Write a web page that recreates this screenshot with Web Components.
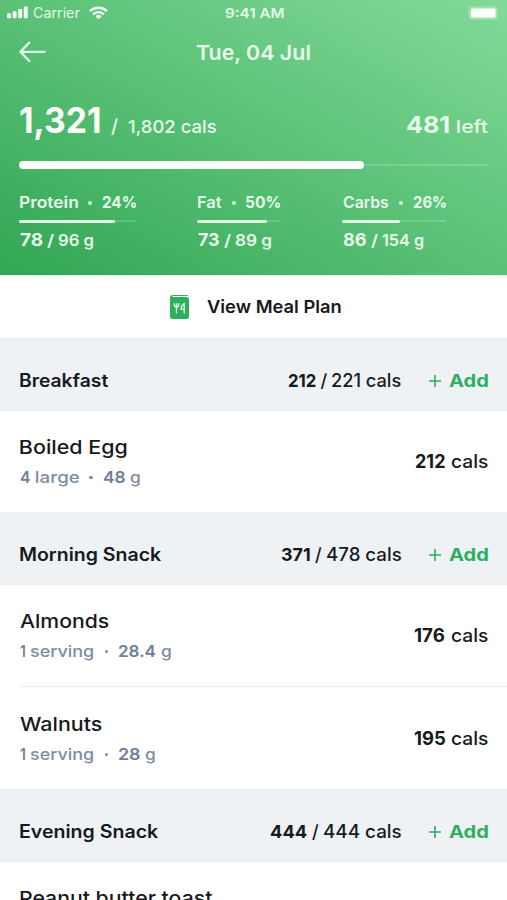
<!DOCTYPE html>
<html lang="en">
<head>
<meta charset="utf-8">
<title>Meal diary</title>
<style>
body{margin:0;background:#fff;width:507px;height:900px;overflow:hidden;font-family:Inter,"Open Sans",sans-serif;color:#17191d}
</style>
</head>
<body>
<diary-app></diary-app>
<script>
const ctx = document.createElement('canvas').getContext('2d');

// One run of text stretched to a given ink width: <fit-text w size weight gap>
class FitText extends HTMLElement {
  connectedCallback() {
    const a = n => this.getAttribute(n);
    const w = +a('w'), size = +a('size') || 18, weight = a('weight') || 500;
    const text = this.textContent;
    ctx.font = `${weight} ${size}px Inter`;
    const m = ctx.measureText(text);
    const k = w / (m.actualBoundingBoxLeft + m.actualBoundingBoxRight);
    const dx = m.actualBoundingBoxLeft * k;
    this.attachShadow({mode: 'open'}).innerHTML = `<style>
      :host{display:inline-block;flex:none;width:${w}px;margin-left:${a('gap') || 0}px;white-space:pre;font-size:${size}px;font-weight:${weight}}
      span{display:inline-block;transform-origin:0 50%;transform:translateX(${dx}px) scaleX(${k})}
    </style><span><slot></slot></span>`;
  }
}

class StatusBar extends HTMLElement {
  connectedCallback() {
    this.attachShadow({mode: 'open'}).innerHTML = `<style>
      :host{display:grid;grid-template-columns:225px 1fr auto;height:26px;line-height:25px;color:#e4f9e9}
      .l{display:flex;align-items:center;height:25px;padding-left:7px}
      .bars{margin-right:5px}.wifi{margin-left:9px}
      .bat{align-self:center;margin:-1px 6px 0 0}
      svg{display:block;flex:none}
    </style>
    <div class="l">
      <svg class="bars" width="21" height="13" viewBox="0 0 21 13" fill="#effcf2"><rect x="0" y="7.3" width="4" height="5" rx="1"/><rect x="5.6" y="5.3" width="4" height="7" rx="1"/><rect x="11.2" y="3" width="4" height="9.300" rx="1"/><rect x="16.8" y=".5" width="4" height="11.800" rx="1"/></svg>
      <fit-text w="46.5" size="14" weight="430">Carrier</fit-text>
      <svg class="wifi" width="19" height="14" viewBox="0 0 19 14" fill="none" stroke="#f3fdf5" stroke-width="2.400"><path d="M1 5.100a12.300 12.300 0 0 1 17 0"/><path d="M4 8.300a8 8 0 0 1 11 0"/><path d="M9.500 13.200 6.300 10.300a4.600 4.600 0 0 1 6.400 0z" fill="#f3fdf5" stroke="none"/></svg>
    </div>
    <div><fit-text w="59" size="13.5" weight="560">9:41 AM</fit-text></div>
    <svg class="bat" width="34" height="16" viewBox="0 0 34 16"><rect x="1.500" y="1.500" width="29" height="13" rx="3.500" fill="#fff" opacity=".28"/><rect x="4" y="3.500" width="24.500" height="9" rx="1.500" fill="#fff"/><path d="M31.500 6.200q1.600 1.600 0 3.600z" fill="#fff" opacity=".35"/></svg>`;
  }
}

class ProgressLine extends HTMLElement {
  connectedCallback() {
    const a = n => this.getAttribute(n);
    this.attachShadow({mode: 'open'}).innerHTML = `<style>
      :host{display:flex;align-items:center;width:${a('total')}px;height:${a('h')}px}
      .f{width:${a('fill')}px;height:100%;border-radius:9px;background:${a('color') || '#fff'}}
      .t{flex:1;height:2px;margin-left:-1px;background:rgba(255,255,255,.17)}
    </style><div class="f"></div><div class="t"></div>`;
  }
}

// Values are "text|width" pairs
const run = (v, size, weight, gap = 0) => {
  const [t, w] = v.split('|');
  return `<fit-text w="${w}" size="${size}" weight="${weight}" gap="${gap}">${t}</fit-text>`;
};

class MacroStat extends HTMLElement {
  connectedCallback() {
    const a = n => this.getAttribute(n);
    this.attachShadow({mode: 'open'}).innerHTML = `<style>
      :host{display:block;line-height:24px;width:${a('total')}px}
      .r{display:flex;align-items:baseline;height:24px;padding-left:.5px}
      .dot{align-self:center;width:4px;height:4px;border-radius:50%;background:#d5f5dc;margin:1px 0 0 10px}
      progress-line{margin:5.500px 0 5px}
    </style>
    <div class="r">${run(a('name'), 16, 560)}<i class="dot"></i>${run(a('pct'), 16, 680, 10.5)}</div>
    <progress-line total="${a('total')}" fill="${a('fill')}" h="3" color="#e0f8e5"></progress-line>
    <div class="r">${run(a('now'), 18, 700)}${run('/|7', 16, 560, 5)}${run(a('goal'), 16, 560, 4)}</div>`;
  }
}

class DayHeader extends HTMLElement {
  connectedCallback() {
    this.attachShadow({mode: 'open'}).innerHTML = `<style>
      :host{display:block;box-sizing:border-box;height:275px;color:#e6faeb;background:linear-gradient(to top right,#31a653 0%,#5cc278 52%,#82da98 100%)}
      .nav{display:grid;grid-template-columns:196px 1fr;height:52px;line-height:53px}
      .nav svg{display:block;margin:15px 0 0 18.500px}
      .sum{display:flex;align-items:baseline;height:50px;line-height:50px;padding:0 19px 0 20px;margin-top:17px}
      .sp{flex:1}
      .big{color:#fff}
      .main{margin:15.500px 0 0 19px}
      .macros{display:flex;margin:21.500px 0 0 19px}
      macro-stat+macro-stat{margin-left:61px}
    </style>
    <status-bar></status-bar>
    <div class="nav">
      <svg width="28" height="22" viewBox="0 0 28 22" fill="none" stroke="#e3f9e8" stroke-width="2.300" stroke-linecap="round" stroke-linejoin="round"><path d="M10.300 1.600 1.400 10.800l8.900 9.200M1.400 10.800h24.100"/></svg>
      <div>${run('Tue, 04 Jul|114', 20.5, 560)}</div>
    </div>
    <div class="sum">
      <span class="big">${run('1,321|80', 36, 750)}</span>${run('/|7', 19, 450, 11)}${run('1,802 cals|88', 17.8, 550, 9.5)}
      <span class="sp"></span>${run('481|42', 23.5, 720)}${run('left|31', 17.8, 550, 8.5)}
    </div>
    <progress-line class="main" total="469" fill="344.5" h="8"></progress-line>
    <div class="macros">
      <macro-stat name="Protein|58" pct="24%|34" total="117" fill="96" now="78|22.500" goal="96 g|35"></macro-stat>
      <macro-stat name="Fat|24" pct="50%|34" total="84" fill="70" now="73|21" goal="89 g|36"></macro-stat>
      <macro-stat name="Carbs|46" pct="26%|33" total="104" fill="58" now="86|23" goal="154 g|41"></macro-stat>
    </div>`;
  }
}

class PlanLink extends HTMLElement {
  connectedCallback() {
    this.attachShadow({mode: 'open'}).innerHTML = `<style>
      :host{display:flex;align-items:center;box-sizing:border-box;height:63px;line-height:24px;padding-left:170px;border-top:1px solid #e3f5e8}
      svg{flex:none;margin-right:18px}
    </style>
    <svg width="19" height="24" viewBox="0 0 19 24"><path d="M3 0h13.500q1.500 0 1.700 1.100H3.200q-.9.200-.9.900H16.500Q19 2.200 19 4.500V21.200Q19 24 16 24H3Q0 24 0 21.200V3Q0 0 3 0z" fill="#2fae5c"/><g fill="none" stroke="#d9f6e1" stroke-width="1.400" stroke-linecap="round" stroke-linejoin="round"><path d="M4.200 8.700q0 3.400 2.300 3.400T8.800 8.700M6.500 8.700v9"/><path d="M14.200 17.700V8.500q-3 1.800-3.200 5.900h3.200"/></g></svg>
    ${run('View Meal Plan|134', 17.6, 620)}`;
  }
}

class MealSection extends HTMLElement {
  connectedCallback() {
    const a = n => this.getAttribute(n);
    this.attachShadow({mode: 'open'}).innerHTML = `<style>
      :host{display:block}
      .h{display:flex;align-items:baseline;box-sizing:border-box;height:73px;line-height:24px;padding:29.500px 19px 0 20px;background:#eef2f5;border-top:1px solid #e9ecee;border-bottom:1px solid #e9ecee}
      .sp{flex:1}
      .add{display:flex;align-items:baseline;color:#2fae62;margin-left:28px}
      svg{align-self:center;flex:none}
    </style>
    <div class="h">${run(a('name'), 18, 630)}<span class="sp"></span>${run(a('now'), 18, 680)}${run('/|7', 18, 450, 5)}${run(a('goal'), 18, 490, 4.5)}
      <span class="add"><svg width="12" height="12" viewBox="0 0 12 12" stroke="#2fae62" stroke-width="1.600"><path d="M6 0v12M0 6h12"/></svg>${run('Add|39.5', 18, 700, 8)}</span></div>
    <slot></slot>`;
  }
}

class FoodRow extends HTMLElement {
  connectedCallback() {
    const a = n => this.getAttribute(n);
    const details = a('num') ? `<div class="d"><span class="q">${run(a('num'), 16.5, 580)}</span>${run(a('unit'), 16.5, 480, 5)}<i class="dot"></i><span class="q">${run(a('amt'), 16.5, 580, 10.5)}</span>${run('g|10.5', 16.5, 480, 5)}</div>` : '';
    const cals = a('cals') ? `<div class="c">${run(a('cals'), 18.3, 680)}${run('cals|37.5', 18.3, 490, 5.5)}</div>` : '';
    this.attachShadow({mode: 'open'}).innerHTML = `<style>
      :host{display:flex;align-items:flex-start;box-sizing:border-box;height:101px;padding:24px 19px 0 20px;background:#fff}
      :host([line]){height:102px;padding-left:0;margin-left:20px;border-bottom:1px solid #e9ecee}
      :host([tall]){height:102px;padding-top:25px}
      .t{flex:1}
      .n{height:26px;line-height:26px;margin-bottom:4px}
      .d,.c{display:flex;align-items:baseline;height:24px;line-height:24px}
      .c{margin-top:14px}
      .d{color:#808ca3}
      .dot{align-self:center;width:3.500px;height:3.500px;border-radius:50%;background:#808ca3;margin:1px 0 0 10.500px}
      .q{color:#717e98}
    </style>
    <div class="t"><div class="n">${run(a('name'), 19, 480)}</div>${details}</div>${cals}`;
  }
}

class DiaryApp extends HTMLElement {
  connectedCallback() {
    this.attachShadow({mode: 'open'}).innerHTML = `<style>:host{display:block;height:900px;overflow:hidden}</style>
    <day-header></day-header>
    <plan-link></plan-link>
    <meal-section name="Breakfast|89" now="212|28" goal="221 cals|68.5">
      <food-row name="Boiled Egg|107" num="4|10.5" unit="large|43" amt="48|22" cals="212|30"></food-row>
    </meal-section>
    <meal-section name="Morning Snack|142" now="371|29" goal="478 cals|74">
      <food-row line name="Almonds|89" num="1|5" unit="serving|64" amt="28.4|37" cals="176|31"></food-row>
      <food-row tall name="Walnuts|82" num="1|5" unit="serving|64" amt="28|21" cals="195|31"></food-row>
    </meal-section>
    <meal-section name="Evening Snack|139" now="444|37" goal="444 cals|77">
      <food-row name="Peanut butter toast|193"></food-row>
    </meal-section>`;
  }
}

customElements.define('fit-text', FitText);
customElements.define('status-bar', StatusBar);
customElements.define('progress-line', ProgressLine);
customElements.define('macro-stat', MacroStat);
customElements.define('day-header', DayHeader);
customElements.define('plan-link', PlanLink);
customElements.define('meal-section', MealSection);
customElements.define('food-row', FoodRow);
customElements.define('diary-app', DiaryApp);
</script>
</body>
</html>
